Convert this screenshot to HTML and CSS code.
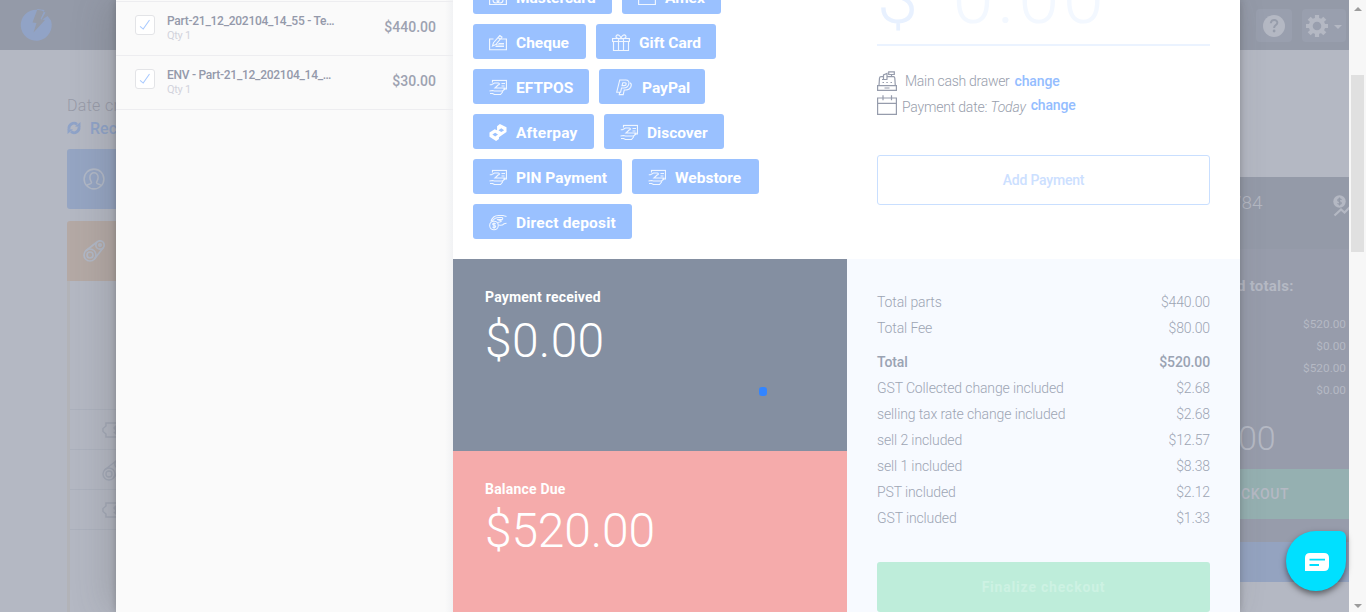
FILE: index.html
```html
<!DOCTYPE html>
<html lang="en">
<head>
<meta charset="utf-8">
<title>Checkout</title>
<link rel="stylesheet" href="styles.css">
</head>
<body>
<svg class="defs" aria-hidden="true">
  <symbol id="i-cash" viewBox="0 0 18 16"><path d="M3.500 3V.8h14v8.700h-3M12.500 4h3.500M12.500 6.500h3M.8 5.200h1.700L5.500 3.500h3.800c1.500.3 1.400 1.700 0 1.900L6 8.500h10.500M.5 11.500l3-.5 2 .500h8l2.500-2M1 14h2.500l2 1h6l2.500-3"/></symbol>
  <symbol id="i-cheque" viewBox="0 0 18 16"><path d="M4.500 4.500H.6v10.900h16.800V4.500h-6M3.500 11.500l1-3.300L10.800 1l2.200 1.700-6.200 7.400-3.300 1.400ZM9 3l2.200 1.700M9.500 9h5.500M6.500 12h8.500M7 10.500h8"/></symbol>
  <symbol id="i-gift" viewBox="0 0 18 17"><path d="M1.500 7.500v9h15v-9M.6 4.500h16.800v3H.6ZM6.500 4.500v12M11.500 4.500v12M9 4.500C5 5 3.500 3.500 4.300 1.800 5.500 0 8.500 1 9 4.500ZM9 4.500c4 .5 5.500-1 4.700-2.700C12.500 0 9.500 1 9 4.500Z"/></symbol>
  <symbol id="i-paypal" viewBox="0 0 18 18"><path d="M4.500 1h6.300c3 0 4 2 3.300 4.500-.7 2.600-2.600 4-5.400 4H6.400l-1 4.500H1.300L4.500 1ZM15.500 4c1.500 1 1.300 3.200.6 4.800-1 2-2.700 2.900-5 2.900H9.200L8.200 16.500H4l.5-2.500M7.700 4l-.8 3h2.400c1.200 0 2-.7 2-1.800 0-.9-.6-1.200-1.500-1.200H7.700Z"/></symbol>
  <symbol id="i-coin" viewBox="0 0 18 16"><circle cx="5" cy="11" r="4.300"/><path d="M6.700 9.500C5.500 8.300 3.500 8.800 3.700 10c.2 1.300 3 .7 3 2 0 1.200-2 1.500-3.200.4M5 8v6.200M2 7C3 3.500 6 1 9.500 1H14l3.500 1M3.500 6.500C5 4 8 3 10 3h3c1.500 1 .5 2.200-1 2H8l4.500 1.500c-1.200 1.500-3 1-4 1.500M10 10.500c2 .5 4-.2 5-1.200l2.500-.5"/></symbol>
  <symbol id="i-part" viewBox="0 0 22 22"><circle cx="7" cy="15" r="6"/><circle cx="7" cy="15" r="3"/><circle cx="17" cy="5" r="4.200"/><circle cx="17" cy="5" r="1.200"/><path d="M2.500 11 14 2M11.200 19.300 20.200 7.700"/></symbol>
  <symbol id="i-tag" viewBox="0 0 24 16"><path d="M4 1h20v14H4v-3L1 9.500v-3L4 4V1Z"/><path d="M15.500 5.500c-1-1.300-3.500-1-3.500.6 0 1.700 3.600 1.500 3.600 3.400 0 1.700-2.700 1.900-3.800.5M13.700 3.500v9"/></symbol>
</svg>

<div class="page">
  <header class="topbar">
    <svg class="logo" viewBox="0 0 32 32"><path fill-rule="evenodd" d="M17 .7A15.500 15.500 0 1 0 31 11.500L27.500 7 21 11.500 25.500 3.500A15.500 15.500 0 0 0 17 .7ZM17.500 0 12.500 13.500 16.500 14 13.500 23.500 25 11 20.500 10 24.500 1Z"/></svg>
    <div class="tools">
      <span class="tool tool-help"><svg viewBox="0 0 22 22"><circle cx="11" cy="11" r="11" fill="#b4b8c3"/><path d="M7.800 8.300C8 3.800 14.600 4.200 14.300 8c-.2 2.100-3.200 2.200-3.200 5" fill="none" stroke="#979dab" stroke-width="2"/><circle cx="11.100" cy="16" r="1.400" fill="#979dab"/></svg></span>
      <span class="tool tool-gear"><svg viewBox="0 0 22 22"><circle cx="11" cy="11" r="6.300" fill="none" stroke="#b4b8c3" stroke-width="4"/><path d="M11 0v4M11 18v4M0 11h4M18 11h4M3.200 3.200l2.900 2.900M15.900 15.900l2.900 2.900M3.200 18.800l2.900-2.900M15.900 6.100l2.900-2.900" stroke="#b4b8c3" stroke-width="4.200"/></svg><i class="caret"></i></span>
    </div>
  </header>
  <div class="body">
    <main class="job">
      <p class="created">Date created</p>
      <p class="recalc"><svg viewBox="0 0 14 14"><path d="M2 8a5 5 0 0 1 8-4.700M12 6a5 5 0 0 1-8 4.700" fill="none" stroke="#8fa3c8" stroke-width="2.800"/><path d="M8 5.500 13.500 6V1ZM6 8.500.5 8v5Z" fill="#8fa3c8"/></svg>Recalculate</p>
      <div class="tile customer"><svg viewBox="0 0 24 24"><circle cx="12" cy="12" r="10.800"/><path d="M4 19.500c1.500-2 5-1.500 5.300-3.700 0-1-1.700-2.300-1.800-5.300C7.300 3.500 16.700 3.500 16.500 10.500c-.1 3-1.800 4.300-1.800 5.300.3 2.200 3.800 1.700 5.300 3.700"/></svg></div>
      <div class="tile parts"><svg viewBox="0 0 22 22"><use href="#i-part"/></svg></div>
      <div class="lines">
        <div class="line"><svg class="tag" viewBox="0 0 24 16"><use href="#i-tag"/></svg></div>
        <div class="line"><svg class="belt" viewBox="0 0 22 22"><use href="#i-part"/></svg></div>
        <div class="line"><svg class="tag" viewBox="0 0 24 16"><use href="#i-tag"/></svg></div>
      </div>
    </main>
    <aside class="totals">
      <div class="jobno"><span>784</span><svg viewBox="0 0 22 22"><circle cx="6.500" cy="6.500" r="6.200" fill="#b4b8c3"/><path d="M8.500 4.700C7 3.300 4.600 3.900 4.800 5.300c.2 1.400 3.500 1 3.500 2.700 0 1.300-2.400 1.600-3.800.4M6.500 2.500v8" fill="none" stroke="#949aa8" stroke-width="1.200"/><path d="M1.500 20.500 8 14.500l3.500 3L18 11" fill="none" stroke="#b4b8c3" stroke-width="2.200"/></svg></div>
      <h4>d totals:</h4>
      <ul><li>$520.00</li><li>$0.00</li><li>$520.00</li><li>$0.00</li></ul>
      <div class="sum">00</div>
      <div class="go">CKOUT</div>
      <div class="alt"></div>
    </aside>
  </div>
</div>

<div class="scrollbar"><i class="up"></i><i class="thumb"></i><i class="down"></i></div>

<div class="modal">
  <section class="items">
    <div class="item"><span class="check"><svg viewBox="0 0 20 20"><path d="M4.500 11.500 8 14.500 15 4.500"/></svg></span><div class="name"><b>Part-21_12_202104_14_55 - Te…</b><small>Qty 1</small></div><span class="price">$440.00</span></div>
    <div class="item"><span class="check"><svg viewBox="0 0 20 20"><path d="M4.500 11.500 8 14.500 15 4.500"/></svg></span><div class="name"><b>ENV - Part-21_12_202104_14_…</b><small>Qty 1</small></div><span class="price">$30.00</span></div>
  </section>
  <section class="pay">
    <div class="upper">
      <div class="methods">
        <div class="row"><span class="btn w139"><svg viewBox="0 0 18 16"><path d="M.6 1h16.800v14H.6Z"/><circle cx="7" cy="10.500" r="3"/><circle cx="11" cy="10.500" r="3"/></svg>Mastercard</span><span class="btn w99"><svg viewBox="0 0 18 16"><path d="M.6 1h16.800v14H.6Z"/></svg>Amex</span></div>
        <div class="row"><span class="btn w113"><svg viewBox="0 0 18 16"><use href="#i-cheque"/></svg>Cheque</span><span class="btn w120"><svg viewBox="0 0 18 17"><use href="#i-gift"/></svg>Gift Card</span></div>
        <div class="row"><span class="btn w116"><svg viewBox="0 0 18 16"><use href="#i-cash"/></svg>EFTPOS</span><span class="btn w106"><svg viewBox="0 0 18 18"><use href="#i-paypal"/></svg>PayPal</span></div>
        <div class="row"><span class="btn w121 wide"><svg viewBox="0 0 18 18"><path fill="#fff" fill-rule="evenodd" stroke="none" d="M8 2.500 11 0 18 3.500V8.500L13 12 10 14v2L7 18 0 13.500V9L5.500 5.500 8 6.500ZM12.500 4.500 9.500 6.500l3 2 3-2ZM6 9.200 3 11.200l3 2 3-2Z"/></svg>Afterpay</span><span class="btn w120"><svg viewBox="0 0 18 16"><use href="#i-cash"/></svg>Discover</span></div>
        <div class="row"><span class="btn w149"><svg viewBox="0 0 18 16"><use href="#i-cash"/></svg>PIN Payment</span><span class="btn w127"><svg viewBox="0 0 18 16"><use href="#i-cash"/></svg>Webstore</span></div>
        <div class="row"><span class="btn w159 wide"><svg viewBox="0 0 18 16"><use href="#i-coin"/></svg>Direct deposit</span></div>
      </div>
      <div class="entry">
        <div class="amount"><span>$</span><em>0.00</em></div>
        <div class="meta drawer"><svg viewBox="0 0 20 20"><path d="M.6 14.600h18.800v4.800H.6ZM2 14.500 2.500 7q.2-1.300 1.500-1.300H6M10.500 5.700h6q1.200 0 1.300 1.300L18.300 14.500M5 8.500h5.500M6.500 8V4l3.500-1.500V8M14.500 5.500V4M11.700.8h5.600v2.700h-5.600ZM5.500 11.500h1.500M9.300 11.500h1.500M13.500 11.500H15M7.500 17h5"/></svg><span>Main cash drawer</span><a>change</a></div>
        <div class="meta date"><svg viewBox="0 0 20 20"><path d="M.6 3h18.800v16.400H.6ZM.6 8.300h18.800M6 .3v5M14.500.3v5"/></svg><span>Payment date: <i>Today</i></span><a>change</a></div>
        <div class="add">Add Payment</div>
      </div>
    </div>
    <div class="lower">
      <div class="figures">
        <div class="fig received"><h3>Payment received</h3><strong>$0.00</strong><i class="spinner"></i></div>
        <div class="fig due"><h3>Balance Due</h3><strong>$520.00</strong></div>
      </div>
      <div class="summary">
        <dl>
          <div><dt>Total parts</dt><dd>$440.00</dd></div>
          <div><dt>Total Fee</dt><dd>$80.00</dd></div>
          <div class="total"><dt>Total</dt><dd>$520.00</dd></div>
          <div><dt>GST Collected change included</dt><dd>$2.68</dd></div>
          <div><dt>selling tax rate change included</dt><dd>$2.68</dd></div>
          <div><dt>sell 2 included</dt><dd>$12.57</dd></div>
          <div><dt>sell 1 included</dt><dd>$8.38</dd></div>
          <div><dt>PST included</dt><dd>$2.12</dd></div>
          <div><dt>GST included</dt><dd>$1.33</dd></div>
        </dl>
        <div class="finalize">Finalize checkout</div>
      </div>
    </div>
  </section>
</div>
<div class="chat"><svg viewBox="0 0 24 18"><path fill="#fff" d="M5 0h14q5 0 5 5v8q0 5-5 5H0V5Q0 0 5 0Z"/><path d="M4.500 6.700h15.500M4.500 12h9.500" stroke="#00e0ff" stroke-width="1.800"/></svg></div>
</body>
</html>
```
FILE: styles.css
```css
* { box-sizing: border-box; }
body { margin: 0; height: 612px; overflow: hidden; position: relative; font-family: Roboto, "Liberation Sans", sans-serif; font-size: 14px; background: #b4b8c3; }
h3, h4, p, ul, dl, dd { margin: 0; padding: 0; }
svg { display: block; flex: none; overflow: visible; }
.defs { position: absolute; width: 0; height: 0; }

/* Dimmed job page */
.page { width: 1349px; height: 612px; overflow: hidden; }
.topbar { height: 50px; background: #949aa8; display: flex; justify-content: space-between; padding: 9px 3px 0 20px; }
.logo { width: 32px; height: 32px; fill: #91a3c6; }
.tools { display: flex; gap: 10px; }
.tool { display: flex; align-items: center; justify-content: center; height: 33px; border-radius: 4px; background: #999fae; }
.tool svg { width: 22px; height: 22px; }
.tool-help { width: 36px; }
.tool-gear { width: 44px; gap: 6px; }
.caret { border: 4px solid transparent; border-top-color: #b4b8c3; border-bottom: 0; margin-top: 3px; }
.body { display: flex; justify-content: space-between; height: 562px; }
.job { width: 400px; padding: 45px 0 0 67px; }
.created { font-size: 16px; line-height: 22px; color: #989ba8; font-weight: 300; letter-spacing: .3px; }
.recalc { display: flex; align-items: center; gap: 9px; height: 22px; font-size: 16px; font-weight: 500; color: #8fa3c8; }
.recalc svg { width: 14px; height: 14px; }
.tile { height: 60px; padding: 19px 16px; border-radius: 3px 0 0 0; }
.tile svg { width: 22px; height: 22px; fill: none; stroke: #b1b8c6; stroke-width: 1.700; }
.customer { background: #95a5c3; margin: 10px 0 12px; border-radius: 3px 0 0 3px; }
.parts { background: #b4a9a5; }
.lines { height: 331px; border-left: 3px solid #b2b3b8; padding-top: 128px; }
.line { height: 40px; border-top: 1px solid #acb1bd; padding: 12px 0 0 32px; }
.line:last-child { height: 41px; border-bottom: 1px solid #acb1bd; }
.line svg { fill: none; stroke: #a2a8b6; stroke-width: 1.400; }
.tag { width: 24px; height: 16px; }
.belt { width: 22px; height: 22px; margin-top: -3px; }
.totals { width: 120px; margin-top: 127px; height: 405px; background: #979cab; color: #b5b9c4; }
.jobno { height: 72px; background: #949aa8; display: flex; justify-content: space-between; padding: 14px 0 0 2px; font-size: 19px; line-height: 24px; font-weight: 300; color: #b4b8c3; }
.jobno svg { width: 22px; height: 22px; margin: 4px -6px 0 0; }
.totals h4 { padding: 28px 0 0 8px; font-size: 15px; line-height: 18px; letter-spacing: .25px; }
.totals ul { list-style: none; padding: 18px 3px 0 0; text-align: right; font-size: 11.800px; line-height: 22px; }
.sum { height: 68px; padding: 17px 0 0 9px; font-size: 34px; line-height: 40px; font-weight: 300; }
.go { height: 50px; background: #95b0b1; padding-left: 12px; line-height: 50px; font-size: 14px; font-weight: 500; letter-spacing: .6px; }
.alt { height: 40px; margin-top: 23px; background: #94a3c0; }

/* Browser scrollbar */
.scrollbar { position: absolute; left: 1349px; top: 0; width: 17px; height: 612px; background: #f7f7f7; display: flex; flex-direction: column; align-items: center; justify-content: space-between; padding: 7px 0 4px; }
.scrollbar .up { border: 4px solid transparent; border-bottom-color: #9c9c9c; border-top: 0; }
.scrollbar .down { border: 4px solid transparent; border-top-color: #9c9c9c; border-bottom: 0; }
.scrollbar .thumb { width: 13px; height: 177px; background: #e0e0e0; margin: 64px 0 auto; }

/* Checkout modal */
.modal { position: absolute; left: 116px; top: 0; width: 1124px; height: 612px; display: flex; box-shadow: -10px 0 34px rgba(70,70,70,.2), 0 0 7px rgba(60,60,60,.32); background: #fafafa; }
.items { width: 337px; padding-top: 1px; background: linear-gradient(to right, transparent 329px, #f1f2f4 337px); }
.item { height: 54px; border-top: 1px solid #ededf0; padding: 12px 17px 0 19px; display: flex; }
.item:last-child { height: 55px; border-bottom: 1px solid #ededf0; }
.check { width: 20px; height: 20px; margin-top: 1px; border: 1px solid #e3e4e7; border-radius: 3px; background: #fff; }
.check path { fill: none; stroke: #a9caff; stroke-width: 1.200; }
.name { flex: 1; margin-left: 12px; white-space: nowrap; color: #9499aa; line-height: 14px; }
.name b { display: block; font-size: 12px; font-weight: 500; letter-spacing: -.27px; }
.name small { display: block; font-size: 11px; color: #d2d3dc; font-weight: 400; line-height: 15px; letter-spacing: -.3px; }
.price { font-size: 14px; font-weight: 500; line-height: 26px; color: #9da2b1; }
.pay { width: 787px; background: #fff; }
.upper { height: 259px; display: flex; overflow: hidden; }
.methods { width: 424px; padding-left: 20px; margin-top: -21px; display: flex; flex-direction: column; gap: 10px; }
.row { display: flex; gap: 10px; }
.btn { height: 35px; flex: none; display: flex; align-items: center; gap: 9px; padding-left: 16px; padding-top: 2px; background: #9ac1ff; border-radius: 3px; color: #fff; font-size: 15.500px; font-weight: 700; white-space: nowrap; }
.btn.wide { letter-spacing: .2px; }
.btn svg { width: 18px; height: 17px; fill: none; stroke: #f0f6ff; stroke-width: 1.150; }
.w139 { width: 139px; } .w99 { width: 99px; } .w113 { width: 113px; } .w120 { width: 120px; } .w116 { width: 116px; } .w106 { width: 106px; } .w121 { width: 121px; } .w149 { width: 149px; } .w127 { width: 127px; } .w159 { width: 159px; }
.entry { width: 333px; }
.amount { height: 79px; margin-top: -33px; border-bottom: 2px solid #ebf3ff; display: flex; gap: 31px; font-size: 74px; line-height: 61px; font-weight: 300; color: #e8f1ff; letter-spacing: 3.500px; }
.amount em { font-style: normal; color: #f3f8ff; }
.meta { display: flex; color: #989eac; font-size: 14px; font-weight: 300; line-height: 20px; white-space: nowrap; letter-spacing: -.2px; }
.meta svg { width: 20px; height: 20px; fill: none; stroke: #969cac; stroke-width: 1.200; }
.meta a { color: #94bdff; font-weight: 500; margin-left: 5px; letter-spacing: -.15px; }
.drawer { margin-top: 25px; }
.drawer span { margin-left: 8px; letter-spacing: -.28px; }
.date { margin-top: 4px; }
.date span { margin-left: 5px; padding-top: 2px; }
.add { margin-top: 38px; height: 50px; border: 1px solid #c9dfff; border-radius: 3px; color: #cce0ff; text-align: center; line-height: 48px; font-weight: 500; letter-spacing: -.2px; }
.lower { display: flex; height: 353px; }
.figures { width: 394px; color: #fff; }
.fig { height: 192px; padding: 29px 32px 0; position: relative; }
.received { background: #848fa1; }
.due { background: #f5abab; height: 161px; }
.fig h3 { font-size: 14px; line-height: 18px; font-weight: 700; letter-spacing: .2px; }
.fig strong { display: block; font-size: 48px; line-height: 66px; font-weight: 300; }
.received strong { line-height: 69px; letter-spacing: .3px; }
.due strong { letter-spacing: -.2px; }
.spinner { position: absolute; left: 306px; top: 128px; width: 8px; height: 9px; border-radius: 3px; background: #3385ff; }
.summary { width: 393px; background: #f7faff; padding: 30px 30px 0; color: #9da5b4; }
.summary dl { font-weight: 300; letter-spacing: -.12px; }
.summary dl div { height: 26px; line-height: 26px; display: flex; justify-content: space-between; }
.summary dl .total { margin-top: 8px; font-weight: 500; color: #9aa3b3; }
.finalize { margin-top: 31px; height: 50px; border-radius: 3px; background: #beedda; color: #cdf2e3; text-align: center; line-height: 50px; font-weight: 700; letter-spacing: .8px; }

.chat { position: absolute; left: 1286px; top: 531px; width: 60px; height: 60px; border-radius: 30px 6px 30px 30px; background: #00e0ff; box-shadow: 0 3px 6px rgba(0,0,0,.5); display: flex; align-items: center; justify-content: center; padding-top: 2px; }
.chat svg { width: 24px; height: 18px; margin-left: 2px; }
```
